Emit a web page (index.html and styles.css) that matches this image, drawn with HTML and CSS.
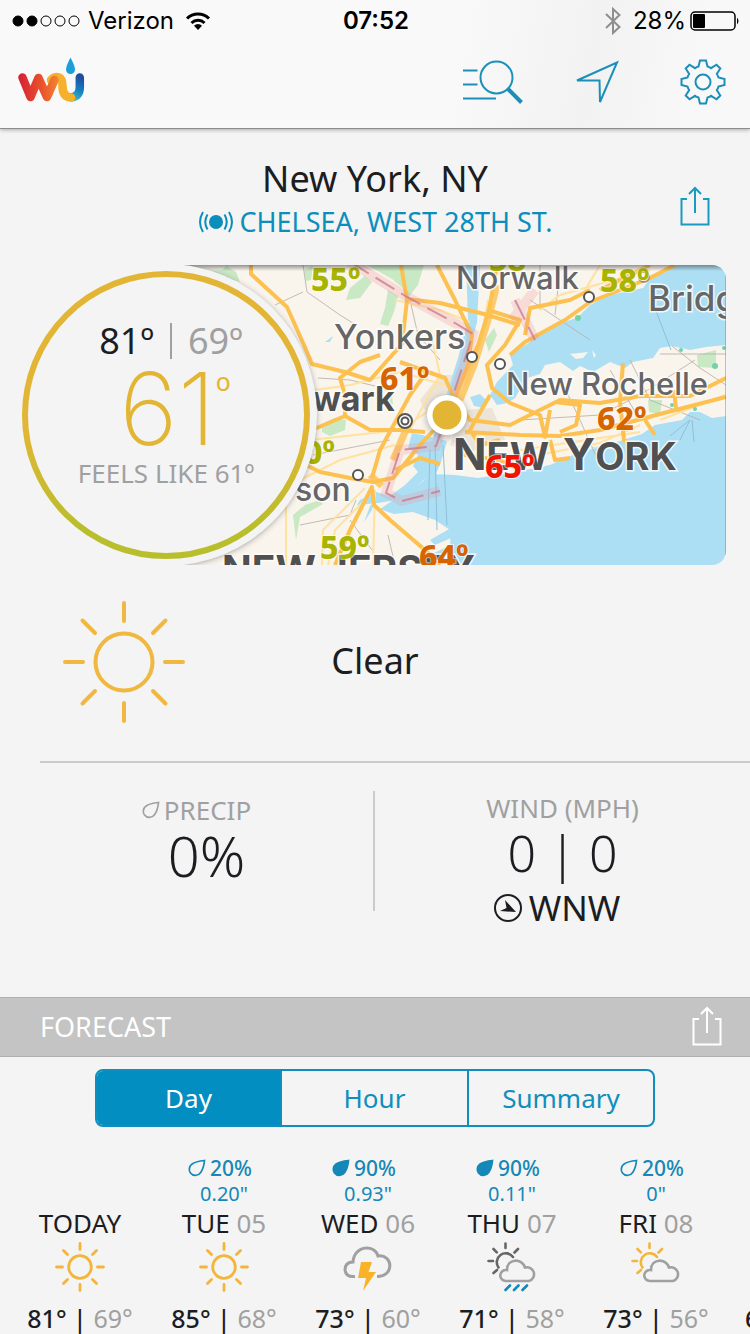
FILE: index.html
```html
<!DOCTYPE html>
<html lang="en">
<head>
<meta charset="utf-8">
<meta name="viewport" content="width=device-width, initial-scale=1">
<title>New York, NY weather</title>
<link rel="stylesheet" href="styles.css">
</head>
<body>
<svg class="defs" width="0" height="0" aria-hidden="true">
  <defs>
    <symbol id="share" viewBox="0 0 30 40"><path d="M7 13H1.500V38.500H28.500V13H23M15 27V2M9 8L15 2L21 8" fill="none" stroke="currentColor" stroke-width="2"/></symbol>
    <symbol id="drop" viewBox="0 0 18 18"><path d="M16.500 1.500C16 7 14.500 11 12.500 13.800A6.200 6.200 0 0 1 2.500 14C.5 11.500 1 7.500 3.800 5.200C7 2.800 11.500 2 16.500 1.500Z" stroke="currentColor" stroke-width="1.700"/></symbol>
    <symbol id="sun" viewBox="0 0 50 50"><g fill="none" stroke="#f3b53a" stroke-width="2.800" stroke-linecap="round"><circle cx="25" cy="25" r="11.300"/><path d="M25 1.500V7.500M25 42.500V48.500M1.500 25H7.500M42.500 25H48.500M8.500 8.500L12.500 12.500M37.500 37.500L41.500 41.500M8.500 41.500L12.500 37.500M37.500 12.500L41.500 8.500"/></g></symbol>
    <symbol id="suncloud" viewBox="0 0 50 50"><g fill="none" stroke-width="2.600" stroke-linecap="round"><path d="M18.500 1.500V6M6.500 7L9.800 10.300M31 7L27.500 10.500M1.500 19H6M6.500 31L10 28M11.500 25.500A8.800 8.800 0 1 1 26 15" stroke="currentColor"/><path d="M19 39A5.500 5.500 0 0 1 18.500 28A3 3 0 0 1 20 28C20 16 35 16 38 25.500A7 7 0 1 1 42 39Z" stroke="#a0a0a0"/></g></symbol>
  </defs>
</svg>

<header class="topbar">
  <div class="status">
    <div class="status-left">
      <svg width="68" height="14" viewBox="0 0 68 14" aria-hidden="true"><g stroke="#000" stroke-width="1"><circle cx="6" cy="7" r="5"/><circle cx="20" cy="7" r="5"/><g fill="none"><circle cx="34" cy="7" r="5"/><circle cx="48" cy="7" r="5"/><circle cx="62" cy="7" r="5"/></g></g></svg>
      <span>Verizon</span>
      <svg width="26" height="20" viewBox="0 0 26 20" aria-hidden="true"><g fill="none" stroke="#000" stroke-width="3"><path d="M2 7.500A15.500 15.500 0 0 1 24 7.500"/><path d="M6.500 12A9.300 9.300 0 0 1 19.500 12"/></g><path d="M13 19L9 14.800A5.500 5.500 0 0 1 17 14.800Z"/></svg>
    </div>
    <time class="clock">07:52</time>
    <div class="status-right">
      <svg width="16" height="28" viewBox="0 0 16 28" aria-hidden="true"><path d="M1 7L14.500 20L8 26V2L14.500 8L1 21" fill="none" stroke="#8e8e8e" stroke-width="2"/></svg>
      <span>28%</span>
      <svg width="50" height="20" viewBox="0 0 50 20" aria-hidden="true"><rect x="1" y="1" width="44" height="18" rx="4" fill="none" stroke="#000" stroke-width="1.500"/><rect x="3" y="3" width="12" height="14" rx="1"/><path d="M47 6.500Q50 10 47 13.500Z"/></svg>
    </div>
  </div>
  <nav class="nav">
    <a class="logo" href="#" aria-label="Weather Underground">
      <svg width="68" height="46" viewBox="17 56 68 46">
        <defs>
          <linearGradient id="lw" gradientUnits="userSpaceOnUse" x1="18" y1="0" x2="66" y2="0"><stop offset="0" stop-color="#d51f35"/><stop offset=".5" stop-color="#e9532c"/><stop offset=".8" stop-color="#f08030"/><stop offset="1" stop-color="#f7ae2b"/></linearGradient>
          <linearGradient id="lu" gradientUnits="userSpaceOnUse" x1="66" y1="100" x2="80" y2="76"><stop offset="0" stop-color="#c9c93a"/><stop offset=".3" stop-color="#31a9c4"/><stop offset=".6" stop-color="#137dc0"/><stop offset="1" stop-color="#214d9f"/></linearGradient>
        </defs>
        <g fill="none" stroke-width="8.500" stroke-linecap="round" stroke-linejoin="round">
          <path d="M71 96.500Q79.800 95.500 79.800 86V76.500" stroke="url(#lu)"/>
          <path d="M51 79Q55 75 59 76.500Q62.500 78 62.500 85Q62.500 96 71 96.500" stroke="#f6b02c"/>
          <path d="M22.500 76.500L30.500 96L38.500 77L47 96L54.500 79" stroke="url(#lw)"/>
        </g>
        <path d="M70.500 56.500Q75 65 75 68.500A4.500 4.500 0 0 1 66 68.500Q66 65 70.500 56.500Z" fill="#1a9fdb"/>
      </svg>
    </a>
    <div class="nav-actions">
      <button type="button" aria-label="Search locations"><svg width="62" height="46" viewBox="463 59 62 46"><g fill="none" stroke="#1b8fb9" stroke-width="2"><path d="M464 70.500H478.500M464 84.500H478.500M464 98.500H497"/><circle cx="497.500" cy="77.500" r="16"/><path d="M509 89L522.500 102.500" stroke-width="4"/></g></svg></button>
      <button type="button" aria-label="Current location"><svg width="46" height="46" viewBox="574 60 46 46"><path d="M577 81.500L617 63.500L600 103L599.500 81.500Z" fill="none" stroke="#1b8fb9" stroke-width="2"/></svg></button>
      <button type="button" aria-label="Settings"><svg width="46" height="46" viewBox="-23 -23 46 46"><g fill="none" stroke="#1b8fb9" stroke-width="2"><circle r="7.500"/><path d="M-3 -21.500H3L4.500 -15.500Q6.500 -15 8 -13.800L13.500 -17.300L17.300 -13.500L13.800 -8Q15 -6.500 15.500 -4.500L21.500 -3V3L15.500 4.500Q15 6.500 13.800 8L17.300 13.500L13.500 17.300L8 13.800Q6.500 15 4.500 15.500L3 21.500H-3L-4.500 15.500Q-6.500 15 -8 13.800L-13.500 17.300L-17.300 13.500L-13.800 8Q-15 6.500 -15.500 4.500L-21.500 3V-3L-15.500 -4.500Q-15 -6.500 -13.800 -8L-17.300 -13.500L-13.500 -17.300L-8 -13.800Q-6.500 -15 -4.500 -15.500Z"/></g></svg></button>
    </div>
  </nav>
</header>

<main>
  <section class="place">
    <div class="place-names">
      <h1>New York, NY</h1>
      <a class="station" href="#">
        <svg width="36" height="24" viewBox="0 0 36 24" aria-hidden="true"><circle cx="18" cy="12" r="7" fill="#0c8ebc"/><g fill="none" stroke="#0c8ebc" stroke-width="2"><path d="M5 2Q-1 12 5 22M9.500 4.500Q5 12 9.500 19.500M31 2Q37 12 31 22M26.500 4.500Q31 12 26.500 19.500"/></g></svg>
        <span>CHELSEA, WEST 28TH ST.</span>
      </a>
    </div>
    <button class="share" type="button" aria-label="Share conditions"><svg width="30" height="40"><use href="#share"/></svg></button>
  </section>

  <section class="hero">
    <svg class="map" viewBox="164 265 562 300" preserveAspectRatio="xMaxYMid slice" role="img" aria-label="Temperature map">
      <defs>
        <filter id="soft" x="-20%" y="-20%" width="140%" height="140%"><feGaussianBlur stdDeviation="3"/></filter>
        <linearGradient id="topshade" x1="0" y1="0" x2="0" y2="1"><stop offset="0" stop-color="#333" stop-opacity=".5"/><stop offset="1" stop-color="#333" stop-opacity="0"/></linearGradient>
      </defs>
      <rect x="164" y="265" width="562" height="300" fill="#f9f4ec"/>
      <g fill="#c9e8c4">
        <path d="M164 265H228L222 270L205 271L240 282L236 272L225 265Z"/>
        <path d="M367 265H424L418 285L408 298L404 289L392 279Z"/>
        <path d="M350 288L365 276L372 282L360 298L346 300Z"/>
        <path d="M388 290L398 296L394 312L388 326L380 324L385 308Z"/>
        <path d="M322 424L334 418L346 420L345 430L330 436L322 432Z"/>
        <path d="M305 505L320 500L323 504L300 517L296 540L293 515Z"/>
        <path d="M384 398L392 396L393 404L387 406Z"/>
        <path d="M697 355L716 350V368L698 367Z"/>
        <path d="M648 400H662L660 414L649 412Z"/>
        <path d="M304 270L313 266L311 280L306 281Z"/>
        <path d="M485 340L494 328L497 335L489 352Z"/>
      </g>
      <g fill="#ece4d8"><path d="M440 375L460 375L452 400L430 420L420 400Z"/><path d="M464 410L492 408L505 440L470 452L450 445Z"/></g>
      <g fill="#addff4">
        <path d="M466 265H480L477 322L466 365L452 405L441 440L433 437L446 396L458 358L468 320Z"/>
        <path d="M677 265H726V345L706 347L690 350L672 346L660 348L653 358L633 362L625 368L610 362L593 372L580 366L573 371L560 362L545 365L540 374L527 378L515 398L507 403L497 405L490 395L497 382L513 365L510 355L530 342L540 332L560 323L577 318L590 305L610 295L643 288L653 275Z"/>
        <path d="M470 397L480 394L486 400L484 408L474 406Z"/>
        <path d="M412 433L432 437L447 441L441 462L436 474L422 481L412 492L396 500L378 503L357 505L360 500L376 492L390 496L405 485L418 472L413 466L418 455L408 448Z"/>
        <path d="M726 416L712 418L700 412L690 412L682 420L655 425L642 434L620 441L600 446L580 450L561 457L545 466L510 473L478 478L455 475L432 474L418 485L395 499L380 509L394 514L413 512L435 520L450 530L451 565H726Z"/>
        <path d="M430 540L451 528V538L435 545ZM430 555L451 545V553L436 558Z"/>
        <path d="M325 342L333 336L330 342ZM364 522L370 506L375 500L372 510Z"/>
      </g>
      <g fill="#f9f4ec">
        <path d="M570 354L588 352L583 358L576 359ZM592 350L596 355L594 358Z"/>
        <path d="M545 455L570 451L600 447L580 452L550 465L510 471L470 476L500 466Z"/>
      </g>
      <g fill="none" stroke="#b7aca5" stroke-width="1" opacity=".8">
        <path d="M303 265L307 292L340 315L356 325M275 305L303 292M318 378L350 380L375 386M313 455L390 440M300 525L350 515L356 500M350 520L372 550M388 535L395 565M410 300L418 335L440 360M540 265V310M560 270L555 315M660 354H726M672 346L700 368L726 385M560 378L580 420L600 465M610 370L640 420M630 360L650 400L700 420M520 420L600 415L640 395L695 360M590 340L530 300"/>
      </g>
      <g fill="none" stroke="#8fbfd6" stroke-width="1"><path d="M656 311L671 350M435 445L437 530M443 445L447 525M430 450L428 520M690 420L670 436M690 420L680 440M692 420L694 442"/></g>
      <g fill="none" stroke="#ffe2a0" stroke-width="2">
        <path d="M315 390L350 385L400 372L445 385M300 480L340 460L395 445M310 440L400 430L430 410M328 565L335 530L365 500M322 565L323 530L365 488M375 490L373 565M512 460L600 443L640 425M520 450L640 432M430 330L440 375L410 430M395 300L440 310L470 322M488 300L480 345L465 385M585 290L600 265M725 395L660 420M286 565V505M540 310L560 295L650 270"/>
      </g>
      <g fill="none" stroke="#fcc150" stroke-width="4" stroke-linejoin="round">
        <path d="M251 265V274L287 307L304 345L312 364L345 372L370 380L402 344L407 300L401 265"/>
        <path d="M407 299L440 303L484 314L520 325M437 265L455 300L472 335L468 365L452 405L432 420M497 265L489 310L478 345L460 385L448 415L420 445L393 478L373 482L350 478L320 472L300 462"/>
        <path d="M312 430L345 416L370 430L400 430L425 432M345 416L345 395L340 378L360 362L380 355M400 362L445 378L455 400L470 420L510 425L560 400L600 403L640 396L690 396L726 378"/>
        <path d="M335 565L350 530L372 487L374 505L390 520L425 550L440 565M372 478L380 450L410 395L428 370"/>
        <path d="M510 355L525 342L565 320L590 302L650 278L675 265M525 335L530 308L570 300L590 290M650 265L600 290"/>
        <path d="M488 310L520 320L505 345L487 365L492 388L510 403L540 415L545 437L550 410M465 432L520 435L560 436L600 430L660 414L726 397M555 402L580 405L576 425L560 432M490 395L470 430L480 445L500 440M455 440L465 455L500 460L520 470M395 470L420 458L440 464M623 363L620 402L624 440L632 445M674 390L676 408M550 440L555 460L570 458M645 420L655 435"/>
      </g>
      <g fill="none" stroke="#fcc150" stroke-width="7" opacity=".8"><path d="M497 285L488 320L474 365L460 400M408 425L393 460M370 475L382 486"/></g>
      <g fill="none" stroke="#ef8e98" stroke-width="10" stroke-opacity=".24"><path d="M350 262L407 297L455 323L473 334L464 365L450 405L436 446L400 450L386 493L402 501L440 491M515 300L535 340M512 320L535 290"/></g>
      <g fill="none" stroke="#ca7788" stroke-width="2" stroke-dasharray="22 8" opacity=".75"><path d="M350 262L407 297L455 323L473 334L450 405L436 446L400 450L386 493L402 501L440 491M515 300L535 340"/></g>
      <g fill="#73d3a8"><circle cx="578" cy="318" r="3"/><circle cx="681" cy="350" r="2"/><circle cx="715" cy="366" r="3"/><circle cx="672" cy="405" r="2"/><circle cx="695" cy="409" r="2"/><circle cx="724" cy="348" r="2"/></g>
      <g fill="#fff" stroke="#555" stroke-width="2"><circle cx="472" cy="357" r="5"/><circle cx="500" cy="364" r="5"/><circle cx="589" cy="297" r="5"/><circle cx="644" cy="277" r="5" opacity=".5"/><circle cx="358" cy="475" r="5"/><circle cx="405" cy="421" r="7"/><circle cx="405" cy="421" r="3.500"/></g>
      <g class="town">
        <text x="456" y="289" font-size="31">Norwalk</text>
        <text x="648" y="311" font-size="35">Bridg</text>
        <text x="334" y="349" font-size="34">Yonkers</text>
        <text x="506" y="395" font-size="31">New Rochelle</text>
        <text x="295" y="501" font-size="32">son</text>
      </g>
      <g class="city">
        <text x="312" y="411" font-size="34">wark</text>
        <text x="453" y="470" font-size="44">N<tspan font-size="38">EW</tspan></text>
        <text x="563" y="470" font-size="44">Y<tspan font-size="38">ORK</tspan></text>
        <text x="222" y="584" font-size="39">NEW JERSEY</text>
      </g>
      <g class="temps">
        <text x="311" y="291" fill="#a9b400">55º</text>
        <text x="489" y="271" fill="#a9b400">58º</text>
        <text x="600" y="292" fill="#a9b400">58º</text>
        <text x="304" y="464" fill="#a9b400">0º</text>
        <text x="320" y="559" fill="#a9b400">59º</text>
        <text x="380" y="390" fill="#d66400">61º</text>
        <text x="597" y="430" fill="#d66400">62º</text>
        <text x="419" y="568" fill="#d66400">64º</text>
        <text x="485" y="478" fill="#f01400">65º</text>
      </g>
      <circle cx="447" cy="417" r="21" fill="#444" opacity=".35" filter="url(#soft)"/>
      <circle cx="447" cy="415" r="20" fill="#fff"/><circle cx="447" cy="415" r="14.500" fill="#e2b634"/>
      <rect x="164" y="265" width="562" height="6" fill="url(#topshade)"/>
      <path d="M725.500 275V555" stroke="#5c8798" stroke-opacity=".45"/>
      <circle cx="166" cy="416" r="150" fill="#333" opacity=".5" filter="url(#soft)"/>
      <circle cx="166" cy="415" r="151" fill="#f4f4f4"/>
    </svg>
    <div class="dial">
      <svg class="ring" viewBox="0 0 288 288" aria-hidden="true"><defs><linearGradient id="rg" x1="0" y1="0" x2="0" y2="1"><stop offset=".55" stop-color="#e2b634"/><stop offset=".9" stop-color="#b9be2c"/></linearGradient></defs><circle cx="144" cy="144" r="141" fill="none" stroke="url(#rg)" stroke-width="6"/></svg>
      <div class="readout">
        <p class="range"><span>81º</span><i class="bar"></i><span class="dim">69º</span></p>
        <p class="now"><span>61</span><sup>º</sup></p>
        <p class="feels">FEELS LIKE 61º</p>
      </div>
    </div>
  </section>

  <section class="sky">
    <svg width="124" height="124" viewBox="0 0 124 124" aria-hidden="true"><g fill="none" stroke="#f0b840" stroke-width="4" stroke-linecap="round"><circle cx="62" cy="62" r="28.500"/><path d="M62 3V21M62 103V121M3 62H21M103 62H121M20.500 20.500L33 33M91 91L103.500 103.500M20.500 103.500L33 91M91 33L103.500 20.500"/></g></svg>
    <p>Clear</p>
  </section>

  <section class="metrics">
    <div class="metric precip">
      <h2><svg class="hollow" width="18" height="18"><use href="#drop"/></svg>PRECIP</h2>
      <p class="value">0%</p>
    </div>
    <div class="metric wind">
      <h2>WIND (MPH)</h2>
      <p class="value">0 | 0</p>
      <p class="heading"><svg width="30" height="30" viewBox="0 0 30 30" aria-hidden="true"><circle cx="15" cy="15" r="13" fill="none" stroke="#1c1d21" stroke-width="2"/><path d="M12 7L23 19L7 18L13.500 15Z" fill="#1c1d21"/></svg>WNW</p>
    </div>
  </section>

  <section class="forecast">
    <div class="forecast-head">
      <h2>FORECAST</h2>
      <button class="share light" type="button" aria-label="Share forecast"><svg width="30" height="40"><use href="#share"/></svg></button>
    </div>
    <div class="tabs" role="tablist">
      <button type="button" role="tab" aria-selected="true">Day</button>
      <button type="button" role="tab" aria-selected="false">Hour</button>
      <button type="button" role="tab" aria-selected="false">Summary</button>
    </div>
    <div class="days">
      <article class="day">
        <p class="chance"></p><p class="amount"></p>
        <h3>TODAY</h3>
        <svg width="50" height="50"><use href="#sun"/></svg>
        <p class="hilo">81° | <span>69°</span></p>
      </article>
      <article class="day">
        <p class="chance"><svg class="hollow" width="18" height="18"><use href="#drop"/></svg>20%</p><p class="amount">0.20"</p>
        <h3>TUE <span>05</span></h3>
        <svg width="50" height="50"><use href="#sun"/></svg>
        <p class="hilo">85° | <span>68°</span></p>
      </article>
      <article class="day">
        <p class="chance"><svg class="full" width="18" height="18"><use href="#drop"/></svg>90%</p><p class="amount">0.93"</p>
        <h3>WED <span>06</span></h3>
        <svg width="50" height="50" viewBox="0 0 50 50"><path d="M12 34.500Q3 35.500 2 28Q2 20 10 20C11 3 32 2 35 14C50 12 52 34.500 34 34.500" fill="none" stroke="#a0a0a0" stroke-width="3"/><path d="M18 20H29L25.500 30H33L20 49L23 36H15Z" fill="#f8b32b"/></svg>
        <p class="hilo">73° | <span>60°</span></p>
      </article>
      <article class="day">
        <p class="chance"><svg class="full" width="18" height="18"><use href="#drop"/></svg>90%</p><p class="amount">0.11"</p>
        <h3>THU <span>07</span></h3>
        <svg class="grey-sun" width="50" height="50" viewBox="0 0 50 50"><use href="#suncloud"/><path d="M18.500 48L23 43.500M27 48L31.500 43.500M35.500 48L40 43.500" stroke="#1488b8" stroke-width="2.600" stroke-linecap="round"/></svg>
        <p class="hilo">71° | <span>58°</span></p>
      </article>
      <article class="day">
        <p class="chance"><svg class="hollow" width="18" height="18"><use href="#drop"/></svg>20%</p><p class="amount">0"</p>
        <h3>FRI <span>08</span></h3>
        <svg class="gold-sun" width="50" height="50"><use href="#suncloud"/></svg>
        <p class="hilo">73° | <span>56°</span></p>
      </article>
      <article class="day next"><p class="hilo">6</p></article>
    </div>
  </section>
</main>
</body>
</html>
```
FILE: styles.css
```css
* { box-sizing: border-box; }
body {
  margin: 0;
  background: #f4f4f4;
  color: #1c1d21;
  font-family: "Noto Sans", "Open Sans", sans-serif;
  overflow-x: hidden;
}
h1, h2, h3, p { margin: 0; font-weight: 400; }
button { font: inherit; color: inherit; background: none; border: 0; padding: 0; }
a { color: inherit; text-decoration: none; }
svg { display: block; flex: none; }
.defs { position: absolute; }

.topbar {
  background: linear-gradient(100deg, #f9f9f9 60%, #f2f2f2 78%, #f8f8f8 92%);
  border-bottom: 1px solid #8c8c8c;
  box-shadow: 0 1px 4px rgba(0, 0, 0, .3);
  height: 129px;
}
.status {
  display: grid;
  grid-template-columns: 1fr auto 1fr;
  align-items: center;
  height: 42px;
  padding: 0 10px 0 12px;
  color: #000;
  font: 24px/40px Inter, sans-serif;
}
.status-left, .status-right { display: flex; align-items: center; gap: 8px; }
.status-right { justify-content: flex-end; gap: 4px; }
.status-right svg:first-child { margin-right: 8px; }
.status-left svg:last-child { margin-left: 3px; }
.clock { font-weight: 600; }
.nav {
  display: flex;
  justify-content: space-between;
  align-items: center;
  height: 80px;
  padding: 0 24px 0 17px;
}
.logo { margin-bottom: 4px; }
.nav-actions { display: flex; align-items: center; gap: 50px; }
.nav-actions button:last-child { margin-left: 10px; }

.place { display: grid; padding: 27px 40px 0; }
.place > * { grid-area: 1 / 1; }
.place-names { text-align: center; height: 109px; }
.place h1 { font-size: 36px; line-height: 46px; }
.station {
  display: flex;
  justify-content: center;
  align-items: center;
  gap: 6px;
  color: #0c8ebc;
  font-size: 27px;
  line-height: 40px;
}
.share { justify-self: end; align-self: start; color: #1b9ac0; }
.place .share { margin-top: 30px; }

.hero { display: grid; padding: 0 24px 0 22px; }
.hero > * { grid-area: 1 / 1; }
.map {
  justify-self: end;
  width: calc(100% - 142px);
  height: 300px;
  border-radius: 0 14px 14px 0;
}
.town, .city { font-family: Inter, sans-serif; paint-order: stroke; stroke: #fff; stroke-opacity: .8; stroke-width: 3px; }
.town { fill: #666; font-weight: 500; }
.city { fill: #505050; font-weight: 700; }
.temps { font: 800 32px "Noto Sans", "Open Sans", sans-serif; paint-order: stroke; stroke: #fff; stroke-opacity: .6; stroke-width: 2px; }
.dial { display: grid; width: 288px; height: 288px; margin-top: 6px; z-index: 1; }
.dial > * { grid-area: 1 / 1; }
.readout { display: flex; flex-direction: column; align-items: center; padding-top: 50px; }
.range { display: flex; align-items: center; gap: 16px; padding-left: 10px; font-size: 36px; line-height: 40px; }
.bar { width: 2px; height: 36px; background: #a0a0a0; }
.dim, .feels { color: #a0a0a0; }
.now { display: flex; padding-left: 18px; color: #e2b634; font: 200 100px/96px Inter, sans-serif; }
.now sup { font: 400 40px/60px "Open Sans", sans-serif; }
.feels { font-size: 26px; line-height: 32px; }

.sky {
  display: grid;
  grid-template-columns: 1fr auto 1fr;
  align-items: center;
  height: 196px;
  padding: 0 62px 2px;
  font-size: 36px;
}
.sky p { padding-bottom: 4px; }

.metrics {
  display: grid;
  grid-template-columns: 335fr 375fr;
  margin-left: 40px;
  padding: 28px 0 86px;
  border-top: 2px solid #cbcbcb;
}
.metric { display: flex; flex-direction: column; align-items: center; height: 120px; }
.precip { border-right: 2px solid #cbcbcb; padding-top: 2px; }
.metric h2 { display: flex; align-items: center; gap: 4px; color: #a0a0a0; font-size: 26px; line-height: 34px; }
.precip h2 { padding-right: 20px; }
.value { font-size: 50px; line-height: 56px; font-weight: 300; }
.precip .value { font-size: 56px; }
.heading { display: flex; align-items: center; gap: 6px; padding-right: 12px; font-size: 35px; line-height: 54px; }
.hollow { fill: none; }
.full { fill: currentColor; }

.forecast-head {
  display: flex;
  justify-content: space-between;
  align-items: center;
  height: 60px;
  padding: 0 28px 2px 40px;
  background: #c4c4c4;
  border-top: 1px solid #b0b0b0;
  border-bottom: 1px solid #b0b0b0;
  color: #fff;
}
.forecast-head h2 { font-size: 27px; }
.light { color: #fff; align-self: center; }
.tabs {
  display: grid;
  grid-template-columns: 183fr 187fr 186fr;
  height: 58px;
  margin: 12px 95px 0;
  border: 2px solid #0f8fbd;
  border-radius: 8px;
  overflow: hidden;
}
.tabs button { color: #0f8fbd; font-size: 26px; }
.tabs button + button { border-left: 2px solid #0f8fbd; }
.tabs button[aria-selected="true"] { background: #028ec1; color: #fff; }
.days {
  display: grid;
  grid-auto-flow: column;
  grid-auto-columns: 144px;
  justify-content: start;
  padding: 28px 0 0 8px;
  overflow: hidden;
}
.day { display: flex; flex-direction: column; align-items: center; height: 179px; }
.day > * { flex: none; }
.day > svg { margin-top: 3px; }
.chance, .amount { display: flex; align-items: center; gap: 4px; height: 26px; color: #1488b8; font-size: 20px; line-height: 26px; }
.chance { padding-right: 8px; font-size: 21px; font-weight: 500; }
.day h3 { font-size: 26px; line-height: 32px; }
.day span { color: #a0a0a0; }
.hilo { font-size: 25px; line-height: 32px; margin-top: 10px; font-weight: 500; }
.hilo span { font-weight: 400; }
.grey-sun { color: #666; }
.gold-sun { color: #f3b53a; }
.next { align-items: flex-start; justify-content: flex-end; padding-left: 17px; }
```
